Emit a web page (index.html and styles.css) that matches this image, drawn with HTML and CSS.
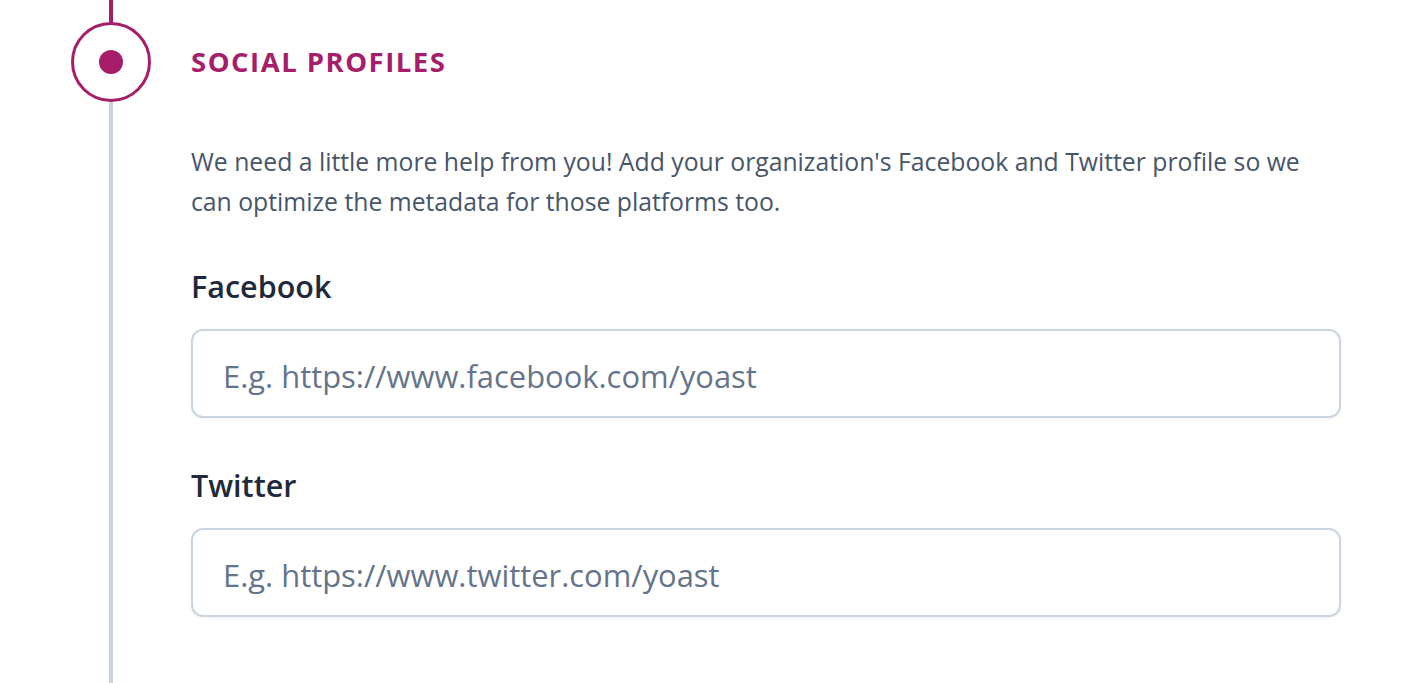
FILE: index.html
```html
<!DOCTYPE html>
<html lang="en">
<head>
<meta charset="utf-8">
<title>Social profiles</title>
<link rel="stylesheet" href="styles.css">
</head>
<body>
<section class="step">
  <div class="timeline">
    <div class="line-top"></div>
    <div class="circle"><div class="dot"></div></div>
    <div class="line-bottom"></div>
  </div>
  <div class="content">
    <div class="head-row">
      <h2 class="title">Social profiles</h2>
    </div>
    <p class="desc">We need a little more help from you! Add your organization's Facebook and Twitter profile so we can optimize the metadata for those platforms too.</p>
    <div class="field field-first">
      <label class="label" for="fb">Facebook</label>
      <input class="input" id="fb" type="text" placeholder="E.g. https://www.facebook.com/yoast">
    </div>
    <div class="field">
      <label class="label" for="tw">Twitter</label>
      <input class="input" id="tw" type="text" placeholder="E.g. https://www.twitter.com/yoast">
    </div>
  </div>
</section>
</body>
</html>
```
FILE: styles.css
```css
html, body {
  margin: 0;
  padding: 0;
  background: #ffffff;
  height: 100%;
  overflow: hidden;
}
body {
  font-family: "Open Sans", "Noto Sans", sans-serif;
}
.step {
  display: flex;
  height: 683px;
  padding-left: 71px;
  box-sizing: border-box;
}
.timeline {
  width: 80px;
  flex: 0 0 80px;
  display: flex;
  flex-direction: column;
  align-items: center;
}
.line-top {
  width: 4px;
  height: 22px;
  background: #a61e69;
}
.circle {
  width: 80px;
  height: 80px;
  box-sizing: border-box;
  border: 3px solid #a61e69;
  border-radius: 50%;
  display: flex;
  align-items: center;
  justify-content: center;
  flex: 0 0 auto;
}
.dot {
  width: 24px;
  height: 24px;
  border-radius: 50%;
  background: #a61e69;
}
.line-bottom {
  width: 4px;
  flex: 1;
  background: #cbd5e1;
}
.content {
  margin-left: 40px;
  width: 1150px;
  padding-top: 22px;
}
.head-row {
  height: 80px;
  display: flex;
  align-items: center;
}
.title {
  margin: 0;
  font-size: 27.5px;
  line-height: 40px;
  font-weight: 700;
  letter-spacing: 1.5px;
  text-transform: uppercase;
  color: #a61e69;
}
.desc {
  margin: 40px 0 0 0;
  font-size: 24.75px;
  line-height: 40px;
  color: #475569;
  max-width: 1130px;
}
.field {
  margin-top: 47px;
  display: flex;
  flex-direction: column;
}
.field-first {
  margin-top: 44px;
}
.label {
  font-size: 30.5px;
  line-height: 40px;
  font-weight: 600;
  color: #1e293b;
  margin-bottom: 23px;
}
.input {
  height: 89px;
  box-sizing: border-box;
  width: 100%;
  border: 2px solid #cbd5e1;
  border-radius: 12px;
  padding: 4px 30px 0 30px;
  font-family: "Open Sans", "Noto Sans", sans-serif;
  font-size: 30.9px;
  color: #1e293b;
  background: #ffffff;
  box-shadow: 0 1px 3px rgba(15, 23, 42, 0.06);
  outline: none;
}
.input::placeholder {
  color: #64748b;
  opacity: 1;
}
```
